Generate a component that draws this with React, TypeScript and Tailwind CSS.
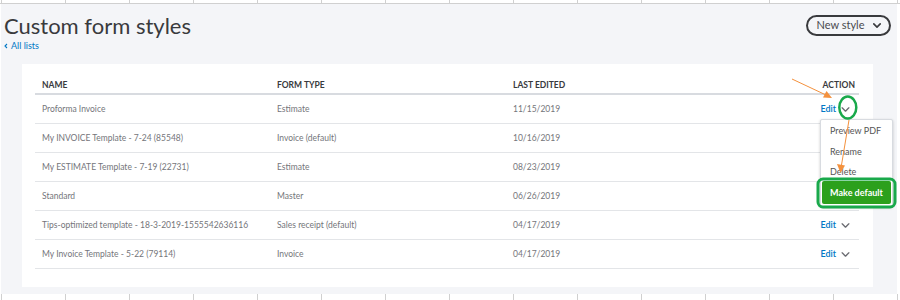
import React from 'react';

interface FormStyle {
  name: string;
  type: string;
  edited: string;
}

const styles: FormStyle[] = [
  { name: 'Proforma Invoice', type: 'Estimate', edited: '11/15/2019' },
  { name: 'My INVOICE Template - 7-24 (85548)', type: 'Invoice (default)', edited: '10/16/2019' },
  { name: 'My ESTIMATE Template - 7-19 (22731)', type: 'Estimate', edited: '08/23/2019' },
  { name: 'Standard', type: 'Master', edited: '06/26/2019' },
  { name: 'Tips-optimized template - 18-3-2019-1555542636116', type: 'Sales receipt (default)', edited: '04/17/2019' },
  { name: 'My Invoice Template - 5-22 (79114)', type: 'Invoice', edited: '04/17/2019' },
];

const Chevron: React.FC<{ className?: string; strokeWidth?: number }> = ({ className = '', strokeWidth = 1.6 }) => (
  <svg viewBox="0 0 10 6" className={className} fill="none">
    <path d="M1 1l4 4 4-4" stroke="currentColor" strokeWidth={strokeWidth} strokeLinecap="round" strokeLinejoin="round" />
  </svg>
);

// spreadsheet gridline strip above and below the pasted screenshot
const GridStrip: React.FC<{ height: string }> = ({ height }) => (
  <div className={`flex pl-[1px] ${height}`}>
    {Array.from({ length: 15 }).map((_, i) => (
      <div key={i} className="w-[64px] shrink-0 border-l border-[#d0d0d0]" />
    ))}
  </div>
);

const App: React.FC = () => {
  return (
    <div className="relative w-[900px] h-[300px] overflow-hidden bg-white font-['Lato',sans-serif]">
      <div className="border-b border-[#d0d0d0]">
        <GridStrip height="h-[3px]" />
      </div>

      <div className="ml-[1px] w-[896px] h-[290px] bg-[#f4f5f8] flex flex-col">
        {/* Page header */}
        <div className="h-[60px] flex justify-between pl-[3px] pr-[6px]">
          <div className="pt-[11px]">
            <h1 className="text-[22px] leading-none text-[#393a3d]">Custom form styles</h1>
            <a className="mt-[3px] flex items-center gap-[3px] text-[9px] leading-[12px] text-[#0077c5]">
              <svg viewBox="0 0 6 8" className="w-[4px] h-[6px]" fill="none">
                <path d="M4.5 1L1.5 4l3 3" stroke="currentColor" strokeWidth="1.6" />
              </svg>
              All lists
            </a>
          </div>
          <button className="mt-[11px] h-[21px] w-[85px] rounded-full border-2 border-[#393a3d] flex items-center justify-center gap-[8px] text-[11px] text-[#4a4b4f]">
            New style
            <Chevron className="w-[8px] h-[5px] text-[#393a3d]" strokeWidth={2} />
          </button>
        </div>

        {/* Table card */}
        <div className="relative ml-[21px] w-[851px] h-[223px] bg-white pt-[13px] pl-[13px] pr-[14px]">
          <div className="grid grid-cols-[235px_236px_1fr_auto] h-[18px] items-center pl-[7px] pr-[4px] border-b-2 border-[#d8dbe0] text-[8.5px] font-bold text-[#393a3d]">
            <span>NAME</span>
            <span>FORM TYPE</span>
            <span>LAST EDITED</span>
            <span>ACTION</span>
          </div>
          {styles.map((s, i) => (
            <div
              key={s.name}
              className="grid grid-cols-[235px_236px_1fr_auto] h-[29px] items-center pl-[7px] pr-[9px] border-b border-[#e3e5e8] text-[8.5px] text-[#74757a]"
            >
              <span>{s.name}</span>
              <span>{s.type}</span>
              <span>{s.edited}</span>
              {/* rows 2-4 sit under the open menu */}
              <span className={`flex items-center gap-[5px] ${i >= 1 && i <= 3 ? 'invisible' : ''}`}>
                <span className="font-semibold text-[9px] text-[#0077c5]">Edit</span>
                <Chevron className="w-[9px] h-[5px] text-[#6b6c72]" />
              </span>
            </div>
          ))}

          {/* Open action menu */}
          <div className="absolute left-[798px] top-[55px] w-[73px] h-[88px] bg-white border border-[#d8dbe0] rounded-[2px] shadow-[0_1px_3px_rgba(0,0,0,0.2)] flex flex-col text-[9px] text-[#555]">
            <div className="h-[21px] flex items-center pl-[9px]">Preview PDF</div>
            <div className="h-[21px] flex items-center pl-[9px]">Rename</div>
            <div className="h-[19px] flex items-center pl-[9px]">Delete</div>
            <button className="mx-[1px] h-[23px] bg-[#2ca01c] rounded-[2px] text-white font-bold text-[9px]">
              Make default
            </button>
          </div>
        </div>
      </div>

      <GridStrip height="h-[6px]" />

      {/* Annotations drawn over the screenshot */}
      <svg className="absolute left-0 top-0 w-[900px] h-[300px] pointer-events-none" viewBox="0 0 900 300">
        <line x1="792" y1="79" x2="826" y2="95" stroke="#f4913d" strokeWidth="1" />
        <polygon points="832,98 823,97.5 826.5,91" fill="#f4913d" />
        <line x1="849" y1="120" x2="841.5" y2="165" stroke="#f4913d" strokeWidth="1" />
        <polygon points="840.5,173 837,164 845,165.5" fill="#f4913d" />
        <ellipse cx="847.8" cy="107.5" rx="8.5" ry="11" fill="none" stroke="#19a94b" strokeWidth="2.5" />
        <rect x="818" y="179" width="77" height="28" rx="5" fill="none" stroke="#19a94b" strokeWidth="3" />
      </svg>
    </div>
  );
};

export default App;
